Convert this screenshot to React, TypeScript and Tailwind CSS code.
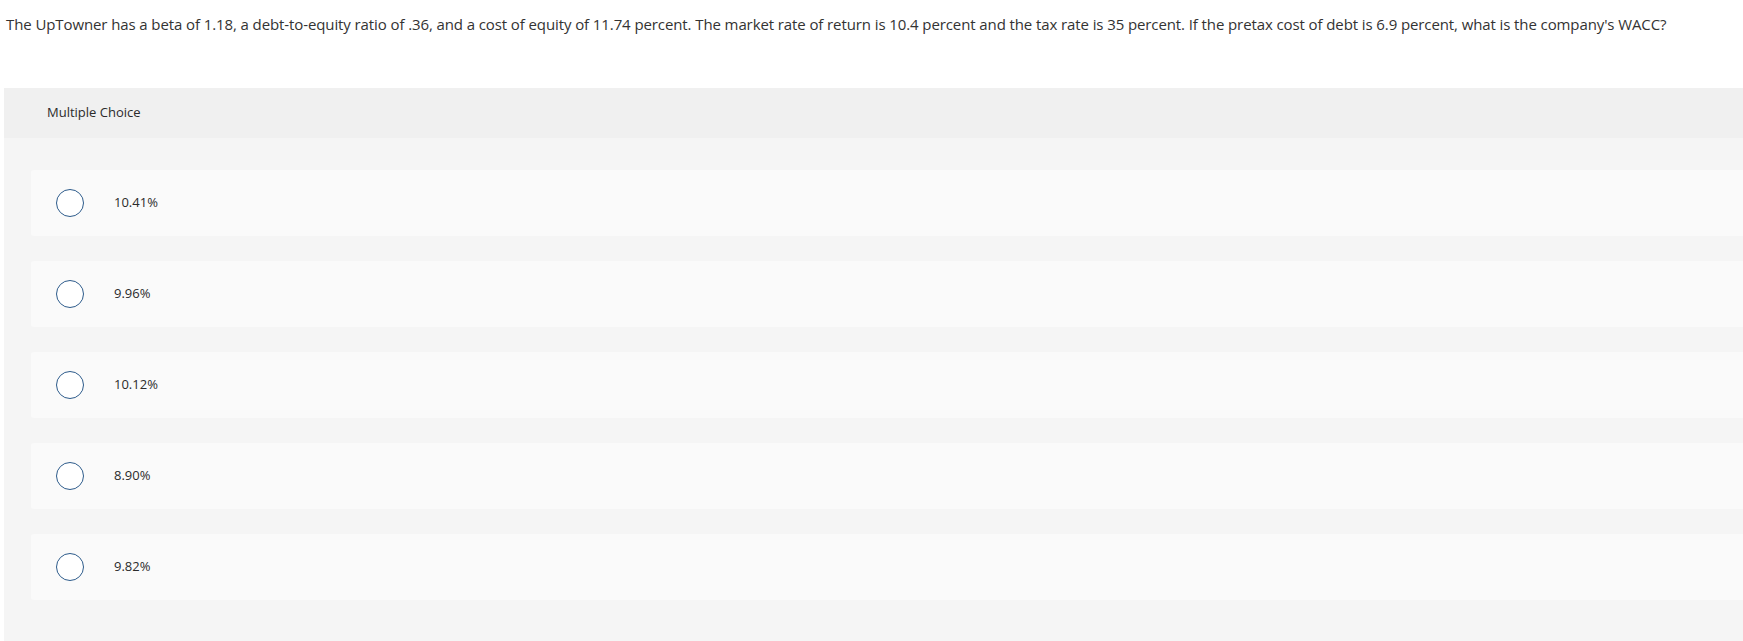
import React from 'react';

const options = ['10.41%', '9.96%', '10.12%', '8.90%', '9.82%'];

const App: React.FC = () => {
  return (
    <div className="min-h-screen bg-white text-[#333333]" style={{ fontFamily: '"Open Sans", "Liberation Sans", sans-serif' }}>
      {/* 题干 */}
      <p className="px-[6px] pt-[12px] text-[15px] leading-[24px] tracking-[-0.1px]">
        The UpTowner has a beta of 1.18, a debt-to-equity ratio of .36, and a cost of equity of 11.74 percent. The market rate of return is 10.4 percent and the tax rate is 35 percent. If the pretax cost of debt is 6.9 percent, what is the company's WACC?
      </p>

      {/* 选项面板 */}
      <div className="mt-[52px] ml-[4px] bg-[#f5f5f5] pb-[50px]">
        <div className="flex h-[50px] items-center bg-[#f0f0f0] pl-[43px] text-[13px] text-[#2b2b2b]">
          Multiple Choice
        </div>

        <div className="flex flex-col gap-[25px] pl-[27px] pt-[32px]">
          {options.map((opt) => (
            <div key={opt} className="flex h-[66px] items-center rounded-l-[3px] bg-[#fafafa] pl-[25px]">
              <span className="h-[28px] w-[28px] shrink-0 rounded-full border-[1.5px] border-[#2d5b8b] bg-white" />
              <span className="ml-[30px] text-[13px] text-[#2b2b2b]">{opt}</span>
            </div>
          ))}
        </div>
      </div>
    </div>
  );
};

export default App;
